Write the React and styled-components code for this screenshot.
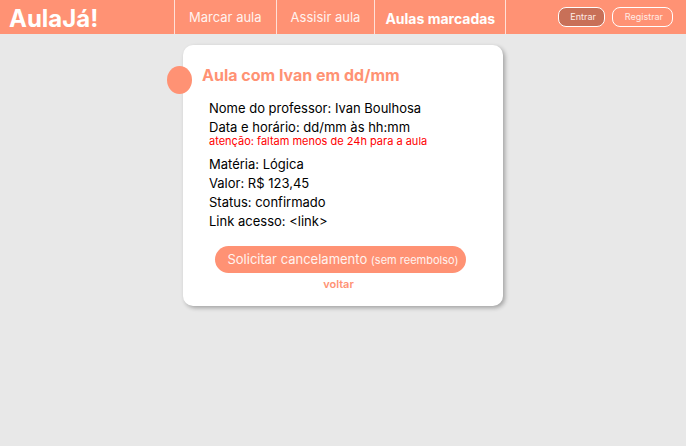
import React from "react";
import styled, { createGlobalStyle } from "styled-components";

const coral = "#ff9274";

const GlobalStyle = createGlobalStyle`
  *, *::before, *::after { box-sizing: border-box; }
  body {
    margin: 0;
    background: #e8e8e8;
    color: #000;
    font-family: Inter, "Liberation Sans", sans-serif;
  }
  button { font-family: inherit; cursor: pointer; }
`;

const Header = styled.header`
  display: flex;
  align-items: center;
  height: 34px;
  padding-right: 13px;
  background: ${coral};
  color: #fff;
`;

const Brand = styled.a`
  flex: 0 0 174px;
  padding: 4px 0 0 9px;
  color: #fff;
  font-size: 24px;
  font-weight: 700;
  line-height: 32px;
  text-decoration: none;
`;

const Nav = styled.nav`
  display: flex;
  align-self: stretch;
  border-right: 1px solid #ffe0d8;
`;

const NavLink = styled.a`
  display: flex;
  align-items: center;
  justify-content: center;
  padding: ${(p) => (p.$active ? "2px 10px 0" : "0 14px")};
  border-left: 1px solid #ffe0d8;
  color: ${(p) => (p.$active ? "#fff" : "#fff3ef")};
  font-size: ${(p) => (p.$active ? 14 : 13)}px;
  font-weight: ${(p) => (p.$active ? 700 : 400)};
  text-decoration: none;
  white-space: nowrap;
`;

const Account = styled.div`
  display: flex;
  gap: 7px;
  margin-left: auto;
`;

const AccountButton = styled.button`
  height: 20px;
  padding: ${(p) => (p.$filled ? "0 8px 0 11px" : "0 9px 0 12px")};
  border: 1px solid #fff;
  border-radius: 8px;
  background: ${(p) => (p.$filled ? "#c87058" : "transparent")};
  color: #ffece6;
  font-size: 9px;
  font-weight: 400;
  line-height: 16px;
`;

const Card = styled.main`
  position: relative;
  width: calc(100% - 32px);
  max-width: 320px;
  margin: 11px auto 24px;
  padding: 20px 26px 15px;
  border-radius: 10px;
  background: #fff;
  box-shadow: 2px 2px 4px rgba(0, 0, 0, 0.3);
`;

const Marker = styled.span`
  position: absolute;
  top: 21px;
  left: -16px;
  width: 25px;
  height: 28px;
  border-radius: 50%;
  background: ${coral};
`;

const Title = styled.h1`
  margin: 0 -7px 14px;
  color: ${coral};
  font-size: 16px;
  font-weight: 700;
  line-height: 20px;
`;

const Details = styled.dl`
  margin: 0 0 15px;
`;

const Detail = styled.div`
  font-size: 13px;
  line-height: 19px;
  dt, dd { display: inline; margin: 0; }
`;

const Warning = styled.small`
  display: block;
  margin-bottom: 10px;
  color: #ff0000;
  font-size: 11px;
  line-height: 8px;
`;

const Actions = styled.div`
  display: flex;
  flex-direction: column;
  align-items: center;
  padding-right: 5px;
`;

const CancelButton = styled.button`
  height: 27px;
  padding: 0 7px 1px 12px;
  border: 0;
  border-radius: 14px;
  background: ${coral};
  color: #fff3ef;
  font-size: 13px;
  font-weight: 400;
  white-space: nowrap;
  small { font-size: 11px; }
`;

const BackLink = styled.a`
  margin-top: 4px;
  padding-right: 4px;
  color: ${coral};
  font-size: 11px;
  font-weight: 600;
  line-height: 14px;
  text-decoration: none;
`;

const lessonLink = "<link>";

function Row({ label, value, note }) {
  return (
    <Detail>
      <dt>{label}: </dt>
      <dd>
        {value}
        {note && <Warning>{note}</Warning>}
      </dd>
    </Detail>
  );
}

export default function App() {
  return (
    <>
      <GlobalStyle />
      <Header>
        <Brand href="#">AulaJá!</Brand>
        <Nav>
          <NavLink href="#marcar">Marcar aula</NavLink>
          <NavLink href="#assistir">Assisir aula</NavLink>
          <NavLink href="#marcadas" $active aria-current="page">Aulas marcadas</NavLink>
        </Nav>
        <Account>
          <AccountButton type="button" $filled>Entrar</AccountButton>
          <AccountButton type="button">Registrar</AccountButton>
        </Account>
      </Header>
      <Card>
        <Marker />
        <Title>Aula com Ivan em dd/mm</Title>
        <Details>
          <Row label="Nome do professor" value="Ivan Boulhosa" />
          <Row
            label="Data e horário"
            value="dd/mm às hh:mm"
            note="atenção: faltam menos de 24h para a aula"
          />
          <Row label="Matéria" value="Lógica" />
          <Row label="Valor" value="R$ 123,45" />
          <Row label="Status" value="confirmado" />
          <Row label="Link acesso" value={lessonLink} />
        </Details>
        <Actions>
          <CancelButton type="button">
            Solicitar cancelamento <small>(sem reembolso)</small>
          </CancelButton>
          <BackLink href="#voltar">voltar</BackLink>
        </Actions>
      </Card>
    </>
  );
}
